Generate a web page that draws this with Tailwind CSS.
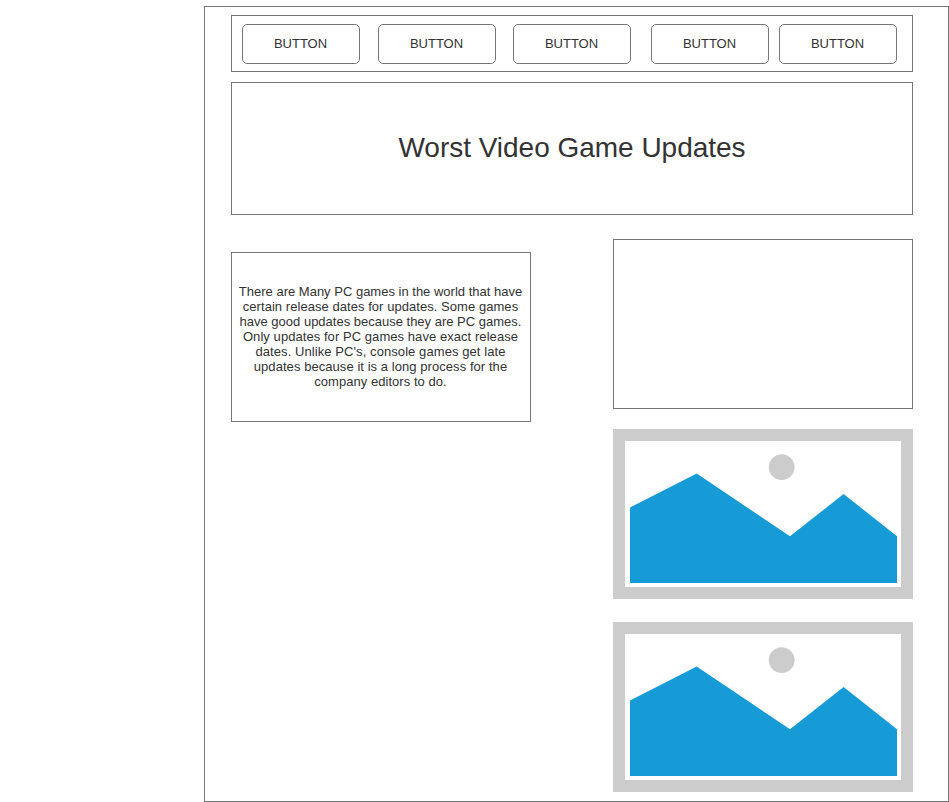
<!DOCTYPE html>
<html lang="en">
<head>
<meta charset="utf-8">
<title>Worst Video Game Updates</title>
<script src="https://cdn.jsdelivr.net/npm/@tailwindcss/browser@4"></script>
</head>
<body class="bg-white font-['Liberation_Sans',Arial,sans-serif] text-[#333333]">
<main class="ml-[204px] pt-[6px] w-[745px] h-[802px] overflow-hidden">
  <div class="h-[796px] border border-[#777777] pl-[26px] pt-2">
    <nav class="w-[682px] h-[57px] border border-[#777777] flex pl-[10px] pt-2 text-[13px] leading-[15px]">
      <button class="w-[118px] h-10 pb-px pr-px border border-[#777777] rounded-[5px]">BUTTON</button>
      <button class="w-[118px] h-10 pb-px pr-px border border-[#777777] rounded-[5px] ml-[18px]">BUTTON</button>
      <button class="w-[118px] h-10 pb-px pr-px border border-[#777777] rounded-[5px] ml-[17px]">BUTTON</button>
      <button class="w-[118px] h-10 pb-px pr-px border border-[#777777] rounded-[5px] ml-5">BUTTON</button>
      <button class="w-[118px] h-10 pb-px pr-px border border-[#777777] rounded-[5px] ml-[10px]">BUTTON</button>
    </nav>
    <header class="mt-[10px] w-[682px] h-[133px] border border-[#777777] flex items-center justify-center pb-[2px]">
      <h1 class="text-[28px] leading-8 tracking-[-0.02px]">Worst Video Game Updates</h1>
    </header>
    <div class="mt-6 w-[682px] flex justify-between items-start">
      <section class="mt-[13px] w-[300px] h-[170px] border border-[#777777] flex items-center justify-center pb-[2px] pr-px">
        <p class="text-center text-[13px] leading-[15px] whitespace-nowrap">There are Many PC games in the world that have<br><span class="tracking-[0.05px]">certain release dates for updates. Some games</span><br>have good updates because they are PC games.<br><span class="tracking-[0.06px]">Only updates for PC games have exact release</span><br><span class="tracking-[0.08px]">dates. Unlike PC's, console games get late</span><br><span class="tracking-[0.06px]">updates because it is a long process for the</span><br><span class="tracking-[0.04px]">company editors to do.</span></p>
      </section>
      <div class="w-[300px]">
        <div class="h-[170px] border border-[#777777]"></div>
        <svg class="block mt-5" width="300" height="170" viewBox="0 0 300 170">
          <rect width="300" height="170" fill="#cccccc"/>
          <rect x="12" y="12" width="276" height="146" fill="#fff"/>
          <circle cx="168.7" cy="38.2" r="12.9" fill="#cccccc"/>
          <path d="M17 78.5 83.7 44.5 177 107.3 230.6 65 284 107.3V154H17Z" fill="#179bd7"/>
        </svg>
        <svg class="block mt-[23px]" width="300" height="170" viewBox="0 0 300 170">
          <rect width="300" height="170" fill="#cccccc"/>
          <rect x="12" y="12" width="276" height="146" fill="#fff"/>
          <circle cx="168.7" cy="38.2" r="12.9" fill="#cccccc"/>
          <path d="M17 78.5 83.7 44.5 177 107.3 230.6 65 284 107.3V154H17Z" fill="#179bd7"/>
        </svg>
      </div>
    </div>
  </div>
</main>
</body>
</html>
